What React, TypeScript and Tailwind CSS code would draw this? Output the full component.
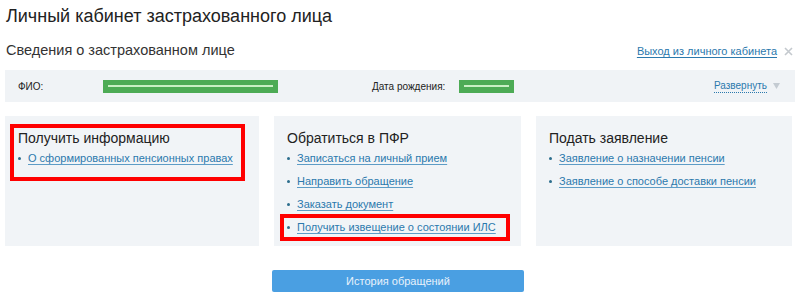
import React from "react";

const font = { fontFamily: '"Liberation Sans", Arial, sans-serif' };

function Link({ children }: { children: React.ReactNode }) {
  return (
    <div className="flex items-center h-[23px]">
      <span className="w-[3px] h-[3px] rounded-full bg-[#2c6d8c] mr-[7px] shrink-0" />
      <a className="text-[11px] text-[#2b79ad] underline underline-offset-2 decoration-[#5d9cc6] whitespace-nowrap">{children}</a>
    </div>
  );
}

function GreenBar({ w }: { w: number }) {
  return (
    <div className="h-[13px] bg-[#4dab55] flex items-center px-[5px]" style={{ width: w }}>
      <div className="h-[2px] w-full bg-[#c9efc4]" />
    </div>
  );
}

export default function App() {
  return (
    <div className="w-[800px] h-[308px] bg-white px-[5px] text-[#222]" style={font}>
      <div className="pt-[4px] pl-[1px] text-[18px] leading-[24px] text-[#222]">Личный кабинет застрахованного лица</div>
      <div className="flex items-center justify-between mt-[13px] h-[20px]">
        <div className="pl-[1px] text-[14.5px] text-[#333]">Сведения о застрахованном лице</div>
        <div className="flex items-center pr-[2px]">
          <a className="text-[11px] text-[#2b79ad] underline underline-offset-2">Выход из личного кабинета</a>
          <svg width="9" height="9" viewBox="0 0 9 9" className="ml-[7px]">
            <path d="M1 1 L8 8 M8 1 L1 8" stroke="#c4c9ce" strokeWidth="1.6" />
          </svg>
        </div>
      </div>
      <div className="mt-[9px] h-[32px] bg-[#f0f3f6] flex items-center text-[10px] text-[#222]">
        <div className="w-[98px] pl-[13px]">ФИО:</div>
        <GreenBar w={175} />
        <div className="w-[94px]" />
        <div className="w-[87px]">Дата рождения:</div>
        <GreenBar w={55} />
        <div className="flex-1" />
        <a className="text-[10px] text-[#2b79ad] border-b border-dotted border-[#2b79ad] leading-[12px]">Развернуть</a>
        <svg width="7" height="6" viewBox="0 0 7 6" className="ml-[6px] mr-[15px]">
          <path d="M0 0 L7 0 L3.5 6 Z" fill="#c4cbd2" />
        </svg>
      </div>
      <div className="mt-[14px] flex h-[130px]">
        <div className="relative w-[254px] bg-[#f1f4f7] pl-[13px] pt-[11px]">
          <div className="text-[14px] leading-[22px] text-[#222]">Получить информацию</div>
          <div className="-mt-[2px]">
            <Link>О сформированных пенсионных правах</Link>
          </div>
          <div className="absolute left-[5px] top-[8px] w-[235px] h-[57px] border-[4px] border-[#ff0000]" />
        </div>
        <div className="relative ml-[15px] w-[247px] bg-[#f1f4f7] pl-[13px] pt-[11px]">
          <div className="text-[14px] leading-[22px] text-[#222]">Обратиться в ПФР</div>
          <div className="-mt-[2px]">
            <Link>Записаться на личный прием</Link>
            <Link>Направить обращение</Link>
            <Link>Заказать документ</Link>
            <Link>Получить извещение о состоянии ИЛС</Link>
          </div>
          <div className="absolute left-[6px] top-[98px] w-[230px] h-[27px] border-[4px] border-[#ff0000]" />
        </div>
        <div className="ml-[15px] w-[256px] bg-[#f1f4f7] pl-[13px] pt-[11px]">
          <div className="text-[14px] leading-[22px] text-[#222]">Подать заявление</div>
          <div className="-mt-[2px]">
            <Link>Заявление о назначении пенсии</Link>
            <Link>Заявление о способе доставки пенсии</Link>
          </div>
        </div>
      </div>
      <div className="mt-[24px] flex">
        <div className="ml-[267px] w-[252px] h-[22px] bg-[#4a9fe2] rounded-[2px] flex items-center justify-center text-[11px] text-[#e8f2fb]">
          История обращений
        </div>
      </div>
    </div>
  );
}
